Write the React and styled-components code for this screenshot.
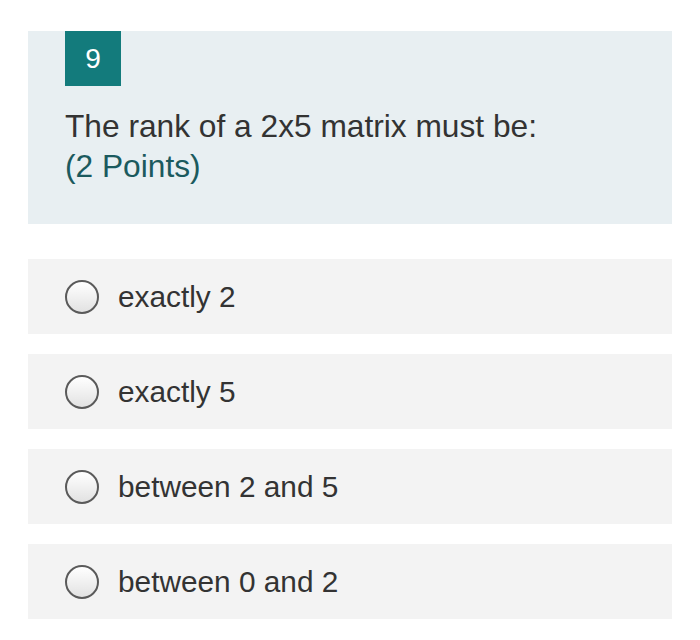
import styled, { createGlobalStyle } from "styled-components";

const GlobalStyle = createGlobalStyle`
  body {
    margin: 0;
    background: #ffffff;
    font-family: "Liberation Sans", Arial, sans-serif;
  }
`;

const options = ["exactly 2", "exactly 5", "between 2 and 5", "between 0 and 2"];

const App = () => {
  return (
    <>
      <GlobalStyle />
      <Page>
        <Header>
          <Badge>9</Badge>
          <Question>
            The rank of a 2x5 matrix must be:
            <Points>(2 Points)</Points>
          </Question>
        </Header>
        <Options>
          {options.map((label) => (
            <Option key={label}>
              <Radio />
              <Label>{label}</Label>
            </Option>
          ))}
        </Options>
      </Page>
    </>
  );
};

export default App;

const Page = styled.div`
  padding: 31px 28px 0 28px;
  width: 644px;
`;

const Header = styled.div`
  background: #e8eff2;
  padding: 0 37px 38px 37px;
`;

const Badge = styled.div`
  width: 56px;
  height: 55px;
  background: #137b7c;
  color: #ffffff;
  font-size: 28px;
  display: flex;
  align-items: center;
  justify-content: center;
`;

const Question = styled.div`
  margin-top: 20px;
  font-size: 31.7px;
  line-height: 40px;
  color: #333333;
`;

const Points = styled.div`
  color: #1b5a5e;
`;

const Options = styled.div`
  display: flex;
  flex-direction: column;
  gap: 20px;
  margin-top: 35px;
`;

const Option = styled.div`
  height: 75px;
  background: #f3f3f3;
  display: flex;
  align-items: center;
  padding-left: 37px;
`;

const Radio = styled.span`
  width: 30px;
  height: 30px;
  border: 2px solid #5a5a5a;
  border-radius: 50%;
  background: linear-gradient(#ffffff, #e2e2e2);
  flex-shrink: 0;
`;

const Label = styled.span`
  margin-left: 19px;
  font-size: 29.8px;
  color: #333333;
`;
